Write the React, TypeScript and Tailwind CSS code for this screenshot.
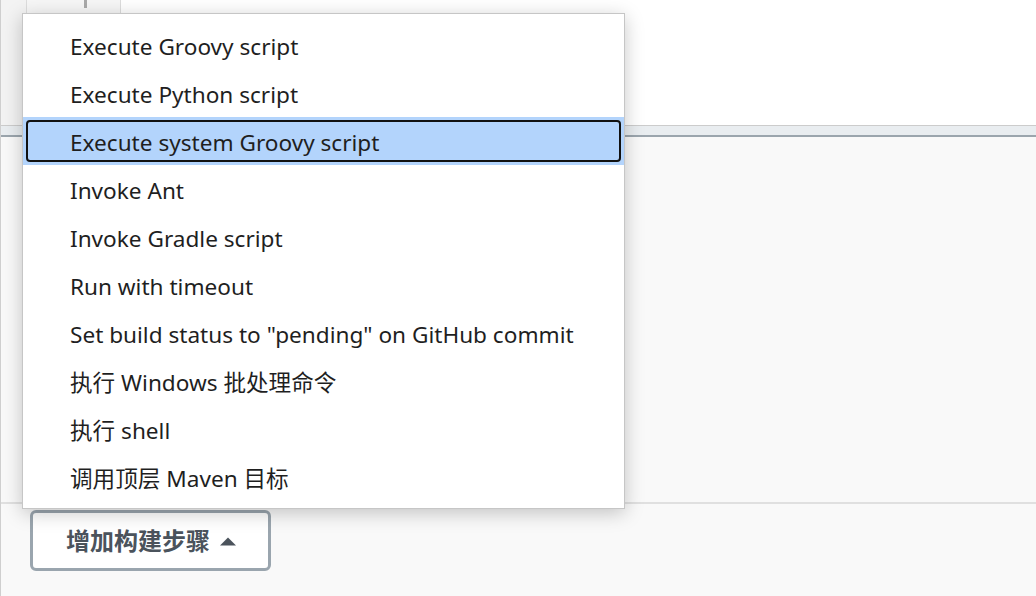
import React from "react";

const items = [
  "Execute Groovy script",
  "Execute Python script",
  "Execute system Groovy script",
  "Invoke Ant",
  "Invoke Gradle script",
  "Run with timeout",
  'Set build status to "pending" on GitHub commit',
  "执行 Windows 批处理命令",
  "执行 shell",
  "调用顶层 Maven 目标",
];

const font = { fontFamily: '"Noto Sans", "Noto Sans CJK SC", sans-serif' };

export default function App() {
  const selected = 2;

  return (
    <div
      className="relative h-[596px] w-[1036px] overflow-hidden border-l border-[#cfcfcf] bg-[#f9f9f9]"
      style={font}
    >
      {/* top section */}
      <div className="flex h-[125px] bg-white">
        <div className="w-[25px] bg-[#f3f3f3]" />
        <div className="relative h-[14px] w-[95px] border-x border-[#dcdcdc] bg-[#f6f6f6]">
          <div className="absolute left-[57px] top-0 h-[8px] w-[3px] bg-[#a9a9a9]" />
        </div>
        <div className="flex-1" />
      </div>
      <div className="h-px bg-[#cccccc]" />
      <div className="h-[9px] bg-[#e9edf0]" />
      <div className="h-[2px] bg-[#9ba5ad]" />

      {/* section body */}
      <div className="h-[365px]" />
      <div className="h-[2px] bg-[#e0e0e0]" />

      <div className="pl-[29px] pt-[6px]">
        <button className="flex h-[61px] w-[241px] items-center gap-[10px] rounded-[6px] border-[3px] border-[#9aa5ae] bg-white pl-[33px] text-[24px] font-bold text-[#4b535c]">
          <span>增加构建步骤</span>
          <svg width="16" height="9" viewBox="0 0 16 9" className="mt-[2px]">
            <path d="M0 8.5 L8 0.5 L16 8.5 Z" fill="#4b535c" />
          </svg>
        </button>
      </div>

      {/* dropdown menu */}
      <div className="absolute left-[21px] top-[13px] w-[603px] border border-[#c6c6c6] bg-white py-[7px] shadow-[0_4px_18px_rgba(0,0,0,0.22)]">
        {items.map((label, i) => (
          <div
            key={label}
            className={`h-[48px] p-[3px] ${i === selected ? "bg-[#b3d4fc]" : ""}`}
          >
            <div
              className={`flex h-full items-center rounded-[4px] border-2 pl-[42px] pt-[3px] text-[22.6px] text-[#1f1f1f] ${
                i === selected ? "border-[#111]" : "border-transparent"
              }`}
            >
              {label}
            </div>
          </div>
        ))}
      </div>
    </div>
  );
}
